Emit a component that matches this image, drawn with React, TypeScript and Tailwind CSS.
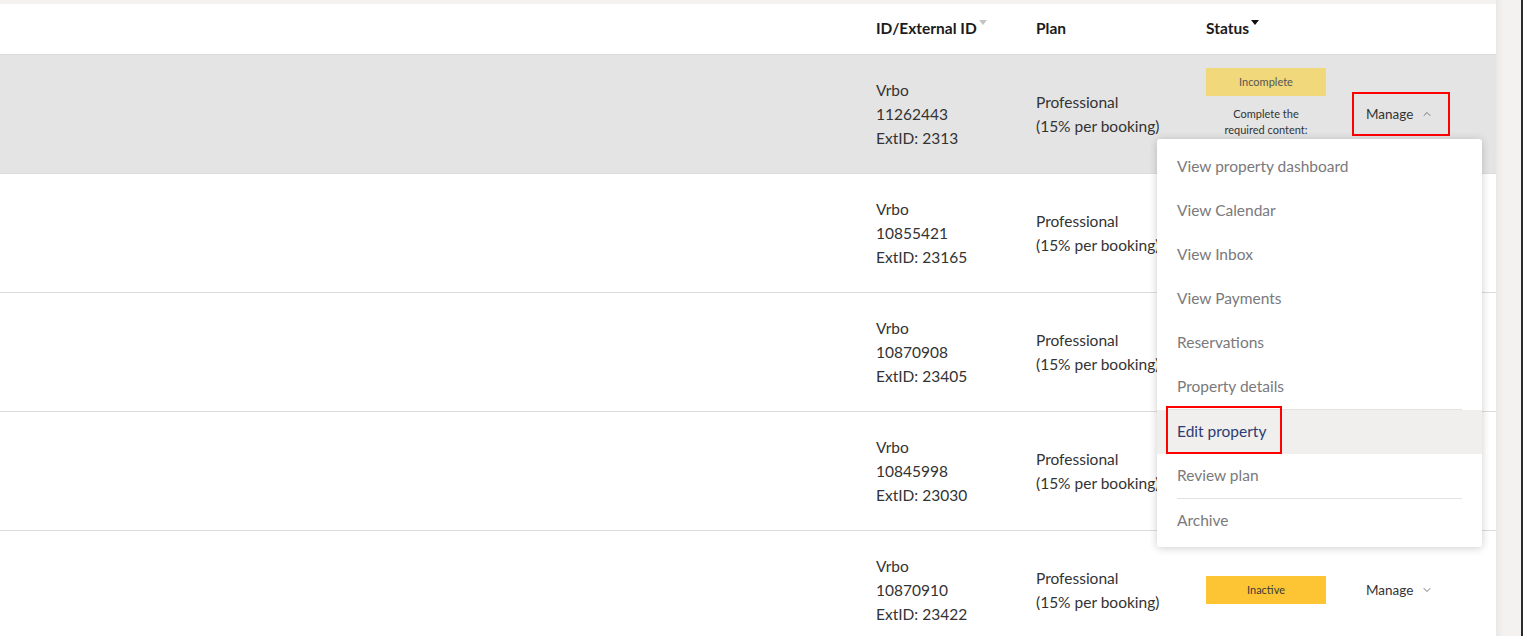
import { ChevronDown, ChevronUp } from 'lucide-react';

interface Listing {
  id: string;
  extId: string;
  status: 'Incomplete' | 'Inactive' | null;
}

const listings: Listing[] = [
  { id: '11262443', extId: '2313', status: 'Incomplete' },
  { id: '10855421', extId: '23165', status: null },
  { id: '10870908', extId: '23405', status: null },
  { id: '10845998', extId: '23030', status: null },
  { id: '10870910', extId: '23422', status: 'Inactive' },
];

const menuItems = [
  'View property dashboard',
  'View Calendar',
  'View Inbox',
  'View Payments',
  'Reservations',
  'Property details',
  'Edit property',
  'Review plan',
  'Archive',
];

function SortArrow({ active }: { active?: boolean }) {
  return (
    <span
      className={`ml-[2px] inline-block w-0 h-0 border-l-[4px] border-r-[4px] border-t-[5px] border-l-transparent border-r-transparent align-top mt-[3px] ${
        active ? 'border-t-[#111]' : 'border-t-[#c4c4c4]'
      }`}
    />
  );
}

function ManageMenu() {
  return (
    <div className="absolute left-[1157px] top-[139px] w-[325px] bg-white rounded-[3px] shadow-[0_1px_8px_rgba(0,0,0,0.2)] pt-[6px] pb-[4px] z-20">
      {menuItems.map((item) => {
        const active = item === 'Edit property';
        return (
          <div key={item}>
            {item === 'Edit property' && <div className="ml-[10px] mr-[20px] h-px bg-[#e2e2e2]" />}
            {item === 'Archive' && <div className="mx-[20px] h-px bg-[#e2e2e2]" />}
            <div
              className={`relative h-[44px] flex items-center px-[20px] text-[15.5px] ${
                active ? 'bg-[#f0efed] text-[#2c3b73]' : 'text-[#7a797c]'
              }`}
            >
              {item}
              {active && (
                <span className="absolute left-[9px] top-[-4px] w-[116px] h-[48px] border-2 border-[#ff0000] pointer-events-none" />
              )}
            </div>
          </div>
        );
      })}
    </div>
  );
}

export default function App() {
  return (
    <div className="h-[636px] w-[1523px] overflow-hidden flex bg-[#f3f2f0]" style={{ fontFamily: 'Lato, "Open Sans", sans-serif' }}>
      <div className="relative w-[1496px] pt-[4px]">
        <div className="bg-white text-[#333]">
          {/* Header */}
          <div className="grid grid-cols-[876px_160px_170px_160px_1fr] h-[51px] items-center border-b border-[#dcdcdc] text-[15.5px] font-bold text-[#1b1b1b]">
            <div />
            <div>
              ID/External ID
              <SortArrow />
            </div>
            <div>Plan</div>
            <div>
              Status
              <SortArrow active />
            </div>
            <div />
          </div>

          {listings.map((row, i) => (
            <div
              key={row.id}
              className={`grid grid-cols-[876px_160px_170px_160px_1fr] h-[119px] items-center border-b border-[#dcdcdc] ${
                i === 0 ? 'bg-[#e4e4e4]' : 'bg-white'
              }`}
            >
              <div />
              <div className="text-[15.5px] leading-[24px]">
                <div>Vrbo</div>
                <div>{row.id}</div>
                <div>ExtID: {row.extId}</div>
              </div>
              <div className="text-[15.5px] leading-[24px]">
                <div>Professional</div>
                <div>(15% per booking)</div>
              </div>
              <div className={row.status === 'Incomplete' ? 'self-start pt-[13px]' : ''}>
                {row.status === 'Incomplete' && (
                  <div className="w-[120px]">
                    <div className="h-[28px] bg-[#f1d87a] flex items-center justify-center text-[11px] text-[#555]">
                      Incomplete
                    </div>
                    <div className="mt-[10px] text-[11px] leading-[16px] text-center text-[#333]">
                      Complete the
                      <br />
                      required content:
                    </div>
                  </div>
                )}
                {row.status === 'Inactive' && (
                  <div className="w-[120px] h-[28px] bg-[#fdc533] flex items-center justify-center text-[11px] text-[#3a3a3a]">
                    Inactive
                  </div>
                )}
              </div>
              <div className="-ml-[14px]">
                {i === 0 ? (
                  <button className="w-[98px] h-[44px] border-2 border-[#ff0000] pl-[12px] flex items-center text-[13.5px] text-[#333]">
                    Manage
                    <ChevronUp className="ml-[8px] w-[12px] h-[12px] text-[#777]" strokeWidth={2} />
                  </button>
                ) : i === 4 ? (
                  <div className="pl-[14px] flex items-center text-[13.5px] text-[#333]">
                    Manage
                    <ChevronDown className="ml-[8px] w-[12px] h-[12px] text-[#777]" strokeWidth={2} />
                  </div>
                ) : null}
              </div>
            </div>
          ))}
        </div>

        <ManageMenu />
      </div>

      {/* scrollbar gutter */}
      <div className="flex-1 bg-[#f3f2f0] shadow-[inset_6px_0_6px_-4px_rgba(0,0,0,0.06)] border-r-2 border-[#2a2a2a]" />
    </div>
  );
}
